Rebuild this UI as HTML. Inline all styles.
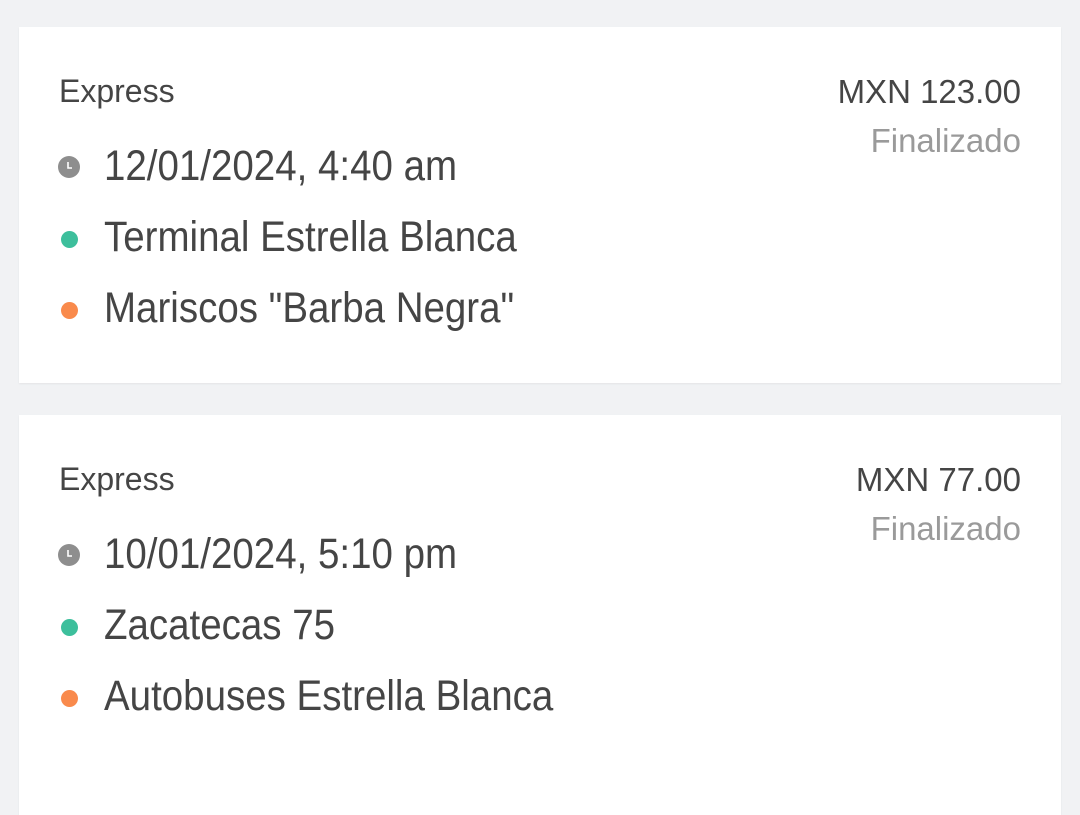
<!DOCTYPE html>
<html><head><style>
body{margin:0;width:1080px;height:771px;background:#f1f2f4;font-family:"Liberation Sans",sans-serif;overflow:hidden;position:relative}
.card{position:absolute;left:19px;width:1042px;background:#fff;box-shadow:0 1px 2px rgba(0,0,0,.06)}
.t{position:absolute;white-space:nowrap;color:#454545}
.s{font-size:32px}
.b{font-size:43px;transform:scaleX(0.895);transform-origin:0 0}
.r{right:40px;text-align:right}
.g{color:#9a9a9a;font-size:33px}
.dot{position:absolute;left:42px;width:17px;height:17px;border-radius:50%}
</style></head><body>
<div class="card" style="top:27px;height:356px">
 <div class="t s" style="left:40px;top:46px">Express</div>
 <div class="t s r" style="top:46px;font-size:33px">MXN 123.00</div>
 <div class="t s r g" style="top:95px">Finalizado</div>
 <svg style="position:absolute;left:39px;top:129px" width="22" height="22"><circle cx="11" cy="11" r="11" fill="#8e8e8e"/><path d="M10 6v6h4" stroke="#fff" stroke-width="1.6" fill="none"/></svg>
 <div class="t b" style="left:85px;top:115px">12/01/2024, 4:40 am</div>
 <div class="dot" style="top:204px;background:#3dbf9c"></div>
 <div class="t b" style="left:85px;top:186px">Terminal Estrella Blanca</div>
 <div class="dot" style="top:275px;background:#f98a4c"></div>
 <div class="t b" style="left:85px;top:257px">Mariscos "Barba Negra"</div>
</div>
<div class="card" style="top:415px;height:400px">
 <div class="t s" style="left:40px;top:46px">Express</div>
 <div class="t s r" style="top:46px;font-size:33px">MXN 77.00</div>
 <div class="t s r g" style="top:95px">Finalizado</div>
 <svg style="position:absolute;left:39px;top:129px" width="22" height="22"><circle cx="11" cy="11" r="11" fill="#8e8e8e"/><path d="M10 6v6h4" stroke="#fff" stroke-width="1.6" fill="none"/></svg>
 <div class="t b" style="left:85px;top:115px">10/01/2024, 5:10 pm</div>
 <div class="dot" style="top:204px;background:#3dbf9c"></div>
 <div class="t b" style="left:85px;top:186px">Zacatecas 75</div>
 <div class="dot" style="top:275px;background:#f98a4c"></div>
 <div class="t b" style="left:85px;top:257px">Autobuses Estrella Blanca</div>
</div>
</body></html>
